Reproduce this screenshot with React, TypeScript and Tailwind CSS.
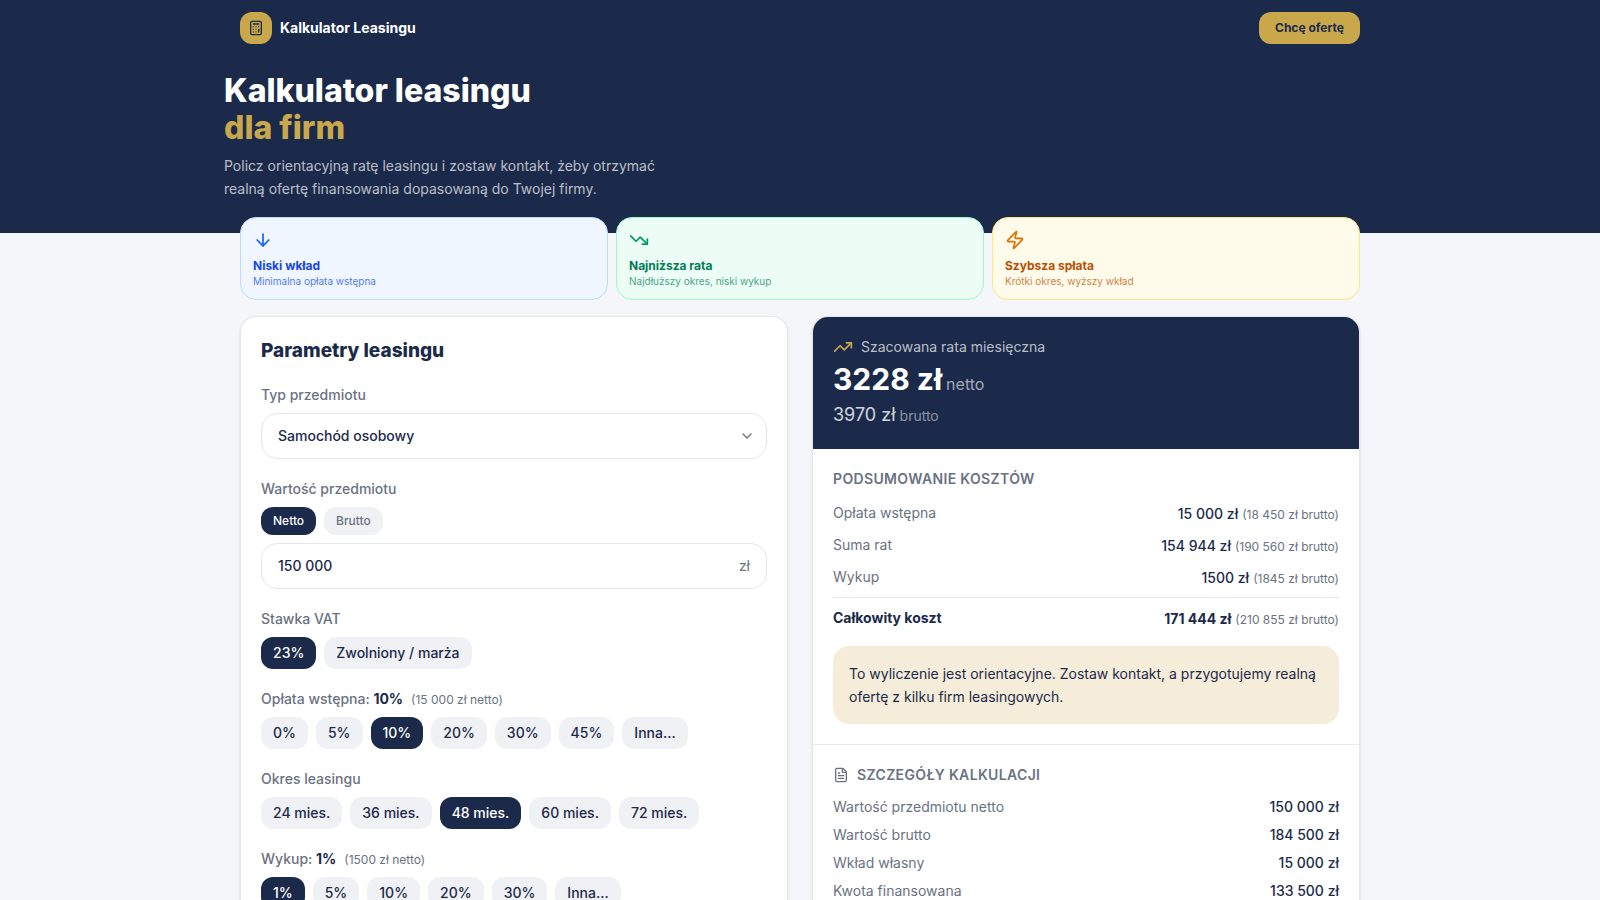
import React, { useState } from 'react';
import {
  ArrowDown,
  Calculator,
  ChevronDown,
  FileText,
  TrendingDown,
  TrendingUp,
  Zap,
} from 'lucide-react';

const presets = [
  {
    title: 'Niski wkład',
    description: 'Minimalna opłata wstępna',
    icon: ArrowDown,
    box: 'border-blue-200 bg-blue-50 text-blue-700',
    iconColor: 'text-blue-600',
  },
  {
    title: 'Najniższa rata',
    description: 'Najdłuższy okres, niski wykup',
    icon: TrendingDown,
    box: 'border-emerald-200 bg-emerald-50 text-emerald-700',
    iconColor: 'text-emerald-600',
  },
  {
    title: 'Szybsza spłata',
    description: 'Krótki okres, wyższy wkład',
    icon: Zap,
    box: 'border-amber-200 bg-amber-50 text-amber-700',
    iconColor: 'text-amber-600',
  },
];

const summary = [
  { label: 'Opłata wstępna', net: '15 000 zł', gross: '(18 450 zł brutto)' },
  { label: 'Suma rat', net: '154 944 zł', gross: '(190 560 zł brutto)' },
  { label: 'Wykup', net: '1500 zł', gross: '(1845 zł brutto)' },
];

const details = [
  { label: 'Wartość przedmiotu netto', value: '150 000 zł' },
  { label: 'Wartość brutto', value: '184 500 zł' },
  { label: 'Wkład własny', value: '15 000 zł' },
  { label: 'Kwota finansowana', value: '133 500 zł' },
];

interface ChipGroupProps {
  id: string;
  label: React.ReactNode;
  options: string[];
  initial: string;
}

const ChipGroup: React.FC<ChipGroupProps> = ({ id, label, options, initial }) => {
  const [selected, setSelected] = useState(initial);

  return (
    <div role="group" aria-labelledby={id}>
      <div id={id} className="mb-2 text-sm font-medium text-gray-500">
        {label}
      </div>
      <div className="flex flex-wrap gap-2">
        {options.map((option) => (
          <button
            key={option}
            type="button"
            aria-pressed={option === selected}
            onClick={() => setSelected(option)}
            className={`rounded-xl px-3 py-1.5 text-sm font-medium ${
              option === selected ? 'bg-[#1b2a4a] text-white' : 'bg-[#f0f1f5] text-[#1b2a4a]'
            }`}
          >
            {option}
          </button>
        ))}
      </div>
    </div>
  );
};

const ParametersCard: React.FC = () => {
  const [mode, setMode] = useState('Netto');
  const [price, setPrice] = useState('150 000');

  return (
    <section className="space-y-5 rounded-2xl border border-gray-200 bg-white p-5 shadow-sm">
      <h2 className="text-[19px]/7 font-extrabold">Parametry leasingu</h2>

      <div>
        <label htmlFor="item-type" className="mb-2 block text-sm font-medium text-gray-500">
          Typ przedmiotu
        </label>
        <div className="relative">
          <select
            id="item-type"
            className="h-[46px] w-full appearance-none rounded-2xl border border-gray-200 bg-white px-4 text-sm font-medium"
          >
            <option>Samochód osobowy</option>
            <option>Samochód dostawczy</option>
          </select>
          <ChevronDown
            size={16}
            className="pointer-events-none absolute inset-y-0 right-3 my-auto text-gray-500"
          />
        </div>
      </div>

      <div>
        <label htmlFor="item-price" className="mb-2 block text-sm font-medium text-gray-500">
          Wartość przedmiotu
        </label>
        <div className="mb-2 flex gap-2">
          {['Netto', 'Brutto'].map((option) => (
            <button
              key={option}
              type="button"
              aria-pressed={option === mode}
              onClick={() => setMode(option)}
              className={`rounded-xl px-3 py-1.5 text-xs font-medium ${
                option === mode ? 'bg-[#1b2a4a] text-white' : 'bg-[#f0f1f5] text-gray-500'
              }`}
            >
              {option}
            </button>
          ))}
        </div>
        <div className="flex h-[46px] items-center rounded-2xl border border-gray-200 px-4">
          <input
            id="item-price"
            type="text"
            value={price}
            onChange={(e) => setPrice(e.target.value)}
            className="min-w-0 flex-1 bg-transparent text-sm font-medium outline-none"
          />
          <span className="text-sm text-gray-500">zł</span>
        </div>
      </div>

      <ChipGroup id="vat" label="Stawka VAT" options={['23%', 'Zwolniony / marża']} initial="23%" />
      <ChipGroup
        id="down-payment"
        label={
          <>
            Opłata wstępna: <span className="font-bold text-[#1b2a4a]">10%</span>
            <span className="ml-2 text-xs font-normal">(15 000 zł netto)</span>
          </>
        }
        options={['0%', '5%', '10%', '20%', '30%', '45%', 'Inna...']}
        initial="10%"
      />
      <ChipGroup
        id="period"
        label="Okres leasingu"
        options={['24 mies.', '36 mies.', '48 mies.', '60 mies.', '72 mies.']}
        initial="48 mies."
      />
      <ChipGroup
        id="buyout"
        label={
          <>
            Wykup: <span className="font-bold text-[#1b2a4a]">1%</span>
            <span className="ml-2 text-xs font-normal">(1500 zł netto)</span>
          </>
        }
        options={['1%', '5%', '10%', '20%', '30%', 'Inna...']}
        initial="1%"
      />
    </section>
  );
};

const ResultsCard: React.FC = () => (
  <section className="overflow-hidden rounded-2xl border border-gray-200 bg-white shadow-sm">
    {/* Monthly rate */}
    <div className="flex flex-col gap-1 bg-[#1b2a4a] p-5 text-white">
      <div className="flex items-center gap-2">
        <TrendingUp size={20} className="text-[#c9a84c]" />
        <span className="text-sm text-white/70">Szacowana rata miesięczna</span>
      </div>
      <p className="text-3xl/9 font-bold">
        3228 zł<span className="ml-1 text-base font-normal text-white/60">netto</span>
      </p>
      <p className="text-lg/7 text-white/80">
        3970 zł<span className="ml-1 text-sm text-white/50">brutto</span>
      </p>
    </div>

    {/* Cost summary */}
    <div className="p-5">
      <h3 className="mb-3 text-sm font-semibold tracking-wide text-gray-500 uppercase">
        Podsumowanie kosztów
      </h3>
      <dl className="space-y-2">
        {summary.map((row) => (
          <div key={row.label} className="flex items-center justify-between">
            <dt className="text-sm text-gray-500">{row.label}</dt>
            <dd>
              <span className="text-sm font-medium">{row.net}</span>
              <span className="ml-1 text-xs text-gray-500">{row.gross}</span>
            </dd>
          </div>
        ))}
        <div className="flex items-center justify-between border-t border-gray-200 pt-2">
          <dt className="text-sm font-bold">Całkowity koszt</dt>
          <dd>
            <span className="text-sm font-bold">171 444 zł</span>
            <span className="ml-1 text-xs text-gray-500">(210 855 zł brutto)</span>
          </dd>
        </div>
      </dl>
      <p className="mt-4 rounded-2xl bg-[#f5ecd9] p-4 text-sm/[23px]">
        To wyliczenie jest orientacyjne. Zostaw kontakt, a przygotujemy realną ofertę z kilku firm
        leasingowych.
      </p>
    </div>

    {/* Calculation details */}
    <div className="border-t border-gray-200 p-5">
      <h3 className="mb-3 flex items-center gap-2 text-sm font-semibold tracking-wide text-gray-500 uppercase">
        <FileText size={16} />
        Szczegóły kalkulacji
      </h3>
      <dl className="space-y-2 text-sm">
        {details.map((row) => (
          <div key={row.label} className="flex justify-between">
            <dt className="text-gray-500">{row.label}</dt>
            <dd className="font-medium">{row.value}</dd>
          </div>
        ))}
      </dl>
    </div>
  </section>
);

export default function App() {
  return (
    <div className="min-h-screen bg-[#f4f6fa] pb-8 font-['Inter',sans-serif] text-[#1b2a4a]">
      <header className="bg-[#1b2a4a]">
        <div className="mx-auto flex h-14 max-w-6xl items-center justify-between px-4">
          <div className="flex items-center gap-2">
            <div className="flex size-8 items-center justify-center rounded-xl bg-[#c9a84c]">
              <Calculator size={16} />
            </div>
            <span className="text-sm font-bold text-white">Kalkulator Leasingu</span>
          </div>
          <button type="button" className="h-8 rounded-xl bg-[#c9a84c] px-4 text-xs font-bold">
            Chcę ofertę
          </button>
        </div>
        <div className="mx-auto max-w-6xl pt-4 pb-[33px]">
          <h1 className="text-[32px]/[37px] font-extrabold text-white">
            Kalkulator leasingu
            <span className="block text-[#c9a84c]">dla firm</span>
          </h1>
          <p className="mt-2 max-w-md text-sm/[23px] text-white/70">
            Policz orientacyjną ratę leasingu i zostaw kontakt, żeby otrzymać realną ofertę
            finansowania dopasowaną do Twojej firmy.
          </p>
        </div>
      </header>

      <main className="mx-auto max-w-6xl px-4">
        <div className="relative -mt-4 grid grid-cols-3 gap-2">
          {presets.map(({ title, description, icon: Icon, box, iconColor }) => (
            <button
              key={title}
              type="button"
              className={`flex flex-col items-start rounded-2xl border px-3 pt-3 pb-2.5 text-left ${box}`}
            >
              <Icon size={20} className={`mb-2 ${iconColor}`} />
              <span className="text-xs/4 font-bold">{title}</span>
              <span className="text-[10px]/[15px] opacity-70">{description}</span>
            </button>
          ))}
        </div>

        <div className="mt-4 grid grid-cols-2 gap-6">
          <ParametersCard />
          <ResultsCard />
        </div>
      </main>
    </div>
  );
}
